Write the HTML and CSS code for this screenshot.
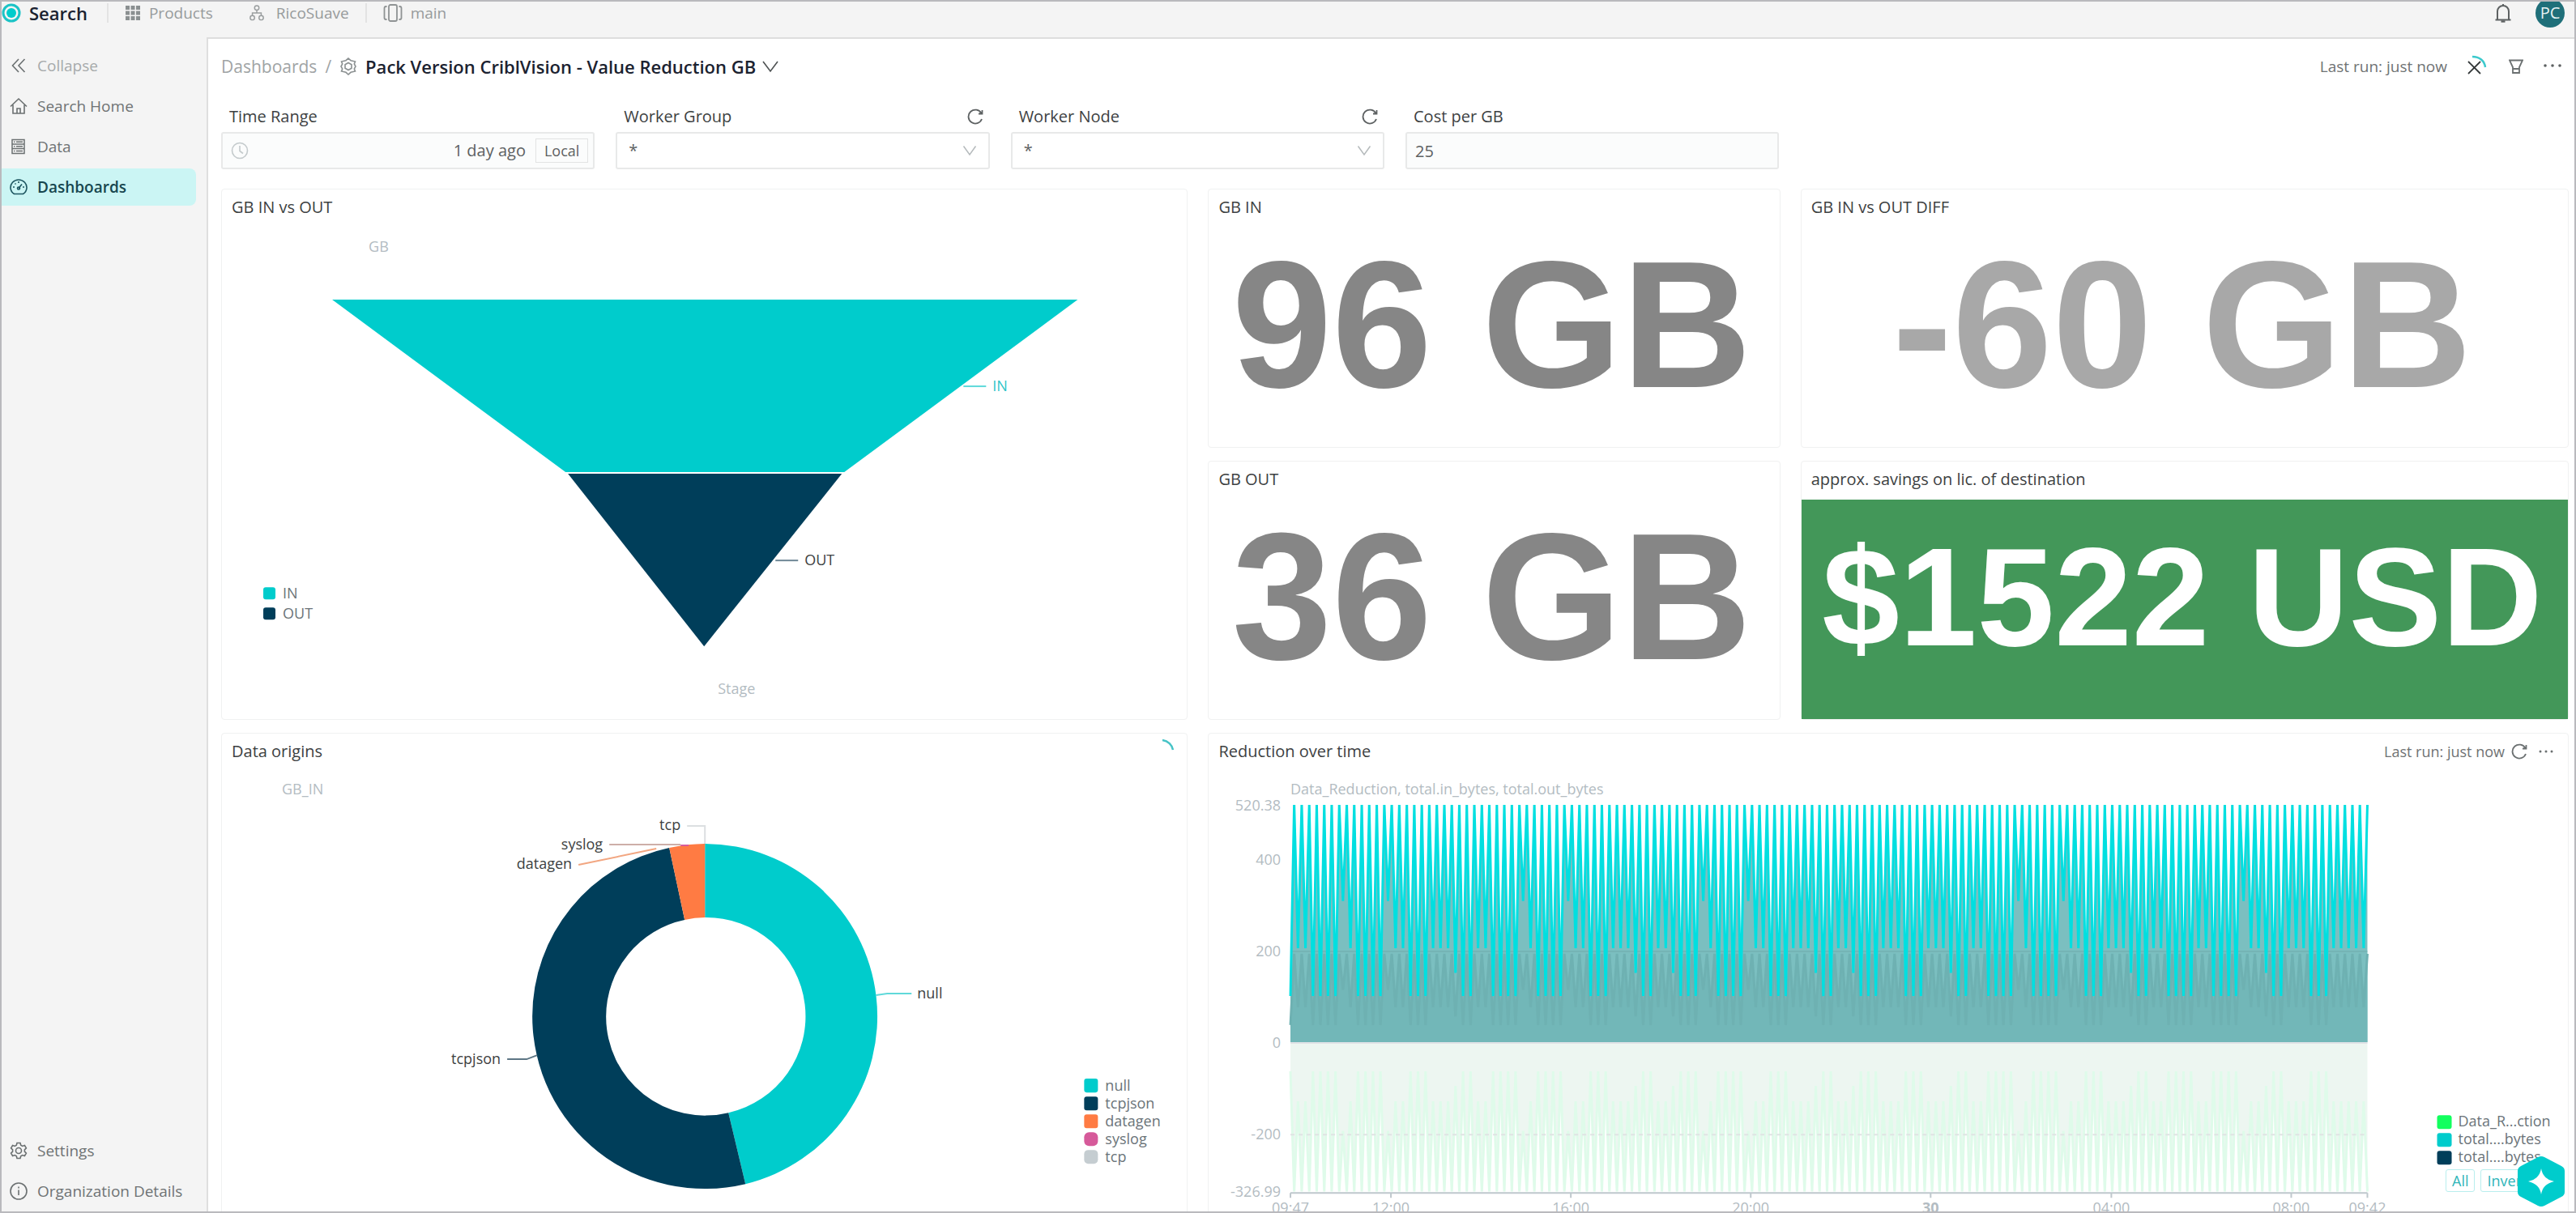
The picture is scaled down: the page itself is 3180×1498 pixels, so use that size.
FILE: index.html
```html
<!DOCTYPE html>
<html lang="en">
<head>
<meta charset="utf-8">
<title>Pack Version CriblVision - Value Reduction GB</title>
<link rel="stylesheet" href="styles.css">
</head>
<body>
<div class="app">
  <header class="topbar">
    <a class="brand" href="#">
      <svg class="brand-logo" viewBox="0 0 24 24"><circle cx="12" cy="12" r="10" fill="none" stroke="#1cc3c6" stroke-width="3"/><circle cx="12" cy="12" r="6" fill="#00cccc"/></svg>
      <span>Search</span>
    </a>
    <span class="divider"></span>
    <a class="crumb" href="#">
      <svg class="icon20" viewBox="0 0 20 20" fill="#8b9091"><path d="M1 1h5v5H1zM7.500 1h5v5h-5zM14 1h5v5h-5zM1 7.500h5v5H1zM7.500 7.500h5v5h-5zM14 7.500h5v5h-5zM1 14h5v5H1zM7.500 14h5v5h-5zM14 14h5v5h-5z"/></svg>
      <span>Products</span>
    </a>
    <a class="crumb crumb-org" href="#">
      <svg class="icon20" viewBox="0 0 20 22" fill="none" stroke="#9a9e9f" stroke-width="1.600"><circle cx="10" cy="4" r="3"/><circle cx="4" cy="17.500" r="3"/><circle cx="16" cy="17.500" r="3"/><path d="M10 7v4M4 14.500V11h12v3.500"/></svg>
      <span>RicoSuave</span>
    </a>
    <span class="divider"></span>
    <a class="crumb" href="#">
      <svg class="icon24" viewBox="0 0 24 24" fill="none" stroke="#8f9394" stroke-width="1.800"><rect x="7" y="2" width="10" height="20" rx="2"/><path d="M4.500 4H3.500Q1.500 4 1.500 6v12q0 2 2 2h1M19.500 4h1q2 0 2 2v12q0 2-2 2h-1"/></svg>
      <span>main</span>
    </a>
    <div class="topbar-end">
      <button class="icon-btn" type="button" aria-label="Notifications">
        <svg class="icon24" viewBox="0 0 24 24" fill="none" stroke="#5d6162" stroke-width="2"><path d="M5 20V10a7 7 0 0 1 14 0v10M2.500 20.500h19M12 3V1"/><path d="M9.500 22.500h5" stroke-width="2.400"/></svg>
      </button>
      <button class="avatar" type="button">PC</button>
    </div>
  </header>

  <nav class="sidebar">
    <a class="nav-item nav-muted" href="#"><svg class="icon22" viewBox="0 0 22 22" fill="none" stroke="#6b7071" stroke-width="1.600"><path d="M11 3l-7.500 8 7.500 8M18.500 3L11 11l7.500 8"/></svg><span>Collapse</span></a>
    <a class="nav-item" href="#"><svg class="icon22" viewBox="0 0 22 22" fill="none" stroke="#6b7071" stroke-width="1.600"><path d="M1 11.500L11 2l10 9.500M4 9.500V20h14V9.500M9 20v-6h4v6"/></svg><span>Search Home</span></a>
    <a class="nav-item" href="#"><svg class="icon22" viewBox="0 0 22 22" fill="none" stroke="#6b7071" stroke-width="1.500"><path d="M3 2.500h15v17H3zM3 8h15M3 13.500h15M8 5.300h8M8 10.800h8M8 16.500h8M5 5.300h1.500M5 10.800h1.500M5 16.500h1.500"/></svg><span>Data</span></a>
    <a class="nav-item nav-active" href="#"><svg class="icon22" viewBox="0 0 22 22" fill="none" stroke="#1d5560" stroke-width="1.600"><path d="M5.500 19.500a10 9.500 0 1 1 11 0z"/><path d="M11 12.500l4-5"/><circle cx="11" cy="12.500" r="1.500"/><path d="M11 4v2M4 11h2M16 11h2M6.500 6.500l1 1"/></svg><span>Dashboards</span></a>
    <span class="spacer"></span>
    <a class="nav-item" href="#"><svg class="icon22" viewBox="0 0 22 22" fill="none" stroke="#6b7071" stroke-width="1.600"><path d="M9 1.500h4l.7 2.800 2 1.100 2.700-.9 2 3.400-2 2v2.200l2 2-2 3.400-2.700-.9-2 1.100-.7 2.800H9l-.7-2.800-2-1.100-2.700.9-2-3.400 2-2V9.900l-2-2 2-3.400 2.700.9 2-1.100z"/><circle cx="11" cy="11" r="3.500"/></svg><span>Settings</span></a>
    <a class="nav-item" href="#"><svg class="icon22" viewBox="0 0 22 22" fill="none" stroke="#6b7071" stroke-width="1.600"><circle cx="11" cy="11" r="10"/><path d="M11 9.500V16M11 5.500v2"/></svg><span>Organization Details</span></a>
  </nav>

  <main class="main">
    <div class="page-head">
      <a class="head-link" href="#">Dashboards</a>
      <span class="head-sep">/</span>
      <svg class="icon22" viewBox="0 0 22 22" fill="none" stroke="#8b9091" stroke-width="1.600"><path d="M11 1l3 2.700 5.500 1.300-1.200 3 1.700 3-1.700 3 1.200 3-5.500 1.300L11 21l-3-2.700L2.500 17l1.200-3L2 11l1.700-3-1.200-3L8 3.700z"/><path d="M11 6.500l4 2.200v4.600l-4 2.200-4-2.200V8.700z"/></svg>
      <h1>Pack Version CriblVision - Value Reduction GB</h1>
      <svg class="icon20" viewBox="0 0 20 20" fill="none" stroke="#4d5152" stroke-width="1.600"><path d="M1 4l9 12 9-12"/></svg>
      <div class="head-actions">
        <span class="last-run">Last run: just now</span>
        <button class="icon-btn" type="button" aria-label="Cancel run"><svg class="icon28" viewBox="0 0 28 28" fill="none"><path d="M2 8l15 15M17 8L2 23" stroke="#333738" stroke-width="1.800"/><path d="M7 2c9 0 15 5 16 13" stroke="#3cc9cc" stroke-width="2.500"/></svg></button>
        <button class="icon-btn" type="button" aria-label="Filter"><svg class="icon18" viewBox="0 0 18 18" fill="none" stroke="#6b7071" stroke-width="1.800"><path d="M1 1.500h16l-4 8.500v7H5v-7zM5 12h8"/></svg></button>
        <button class="icon-btn" type="button" aria-label="More"><svg class="icon24" viewBox="0 0 24 24" fill="#5d6162"><circle cx="3" cy="11" r="1.800"/><circle cx="12" cy="11" r="1.800"/><circle cx="21" cy="11" r="1.800"/></svg></button>
      </div>
    </div>

    <form class="filters">
      <div class="field">
        <div class="field-head"><label for="range">Time Range</label></div>
        <button class="control range" id="range" type="button">
          <svg class="icon22" viewBox="0 0 22 22" fill="none" stroke="#c4cacc" stroke-width="1.600"><circle cx="11" cy="11" r="9.500"/><path d="M11 5v6.500l4 3"/></svg>
          <span class="range-value">1 day ago</span><span class="tag">Local</span>
        </button>
      </div>
      <div class="field">
        <div class="field-head"><label for="group">Worker Group</label><svg class="icon20" viewBox="0 0 20 20" fill="none" stroke="#5d6162" stroke-width="1.800"><path d="M17.500 6A8.500 8.500 0 1 0 18 13M18.500 2v4.500H14"/></svg></div>
        <div class="select-wrap"><select class="control" id="group"><option>*</option></select><svg class="chevron" viewBox="0 0 18 14" fill="none" stroke="#b5babc" stroke-width="1.500"><path d="M1.500 1.500L9 12l7.500-10.500"/></svg></div>
      </div>
      <div class="field">
        <div class="field-head"><label for="node">Worker Node</label><svg class="icon20" viewBox="0 0 20 20" fill="none" stroke="#5d6162" stroke-width="1.800"><path d="M17.500 6A8.500 8.500 0 1 0 18 13M18.500 2v4.500H14"/></svg></div>
        <div class="select-wrap"><select class="control" id="node"><option>*</option></select><svg class="chevron" viewBox="0 0 18 14" fill="none" stroke="#b5babc" stroke-width="1.500"><path d="M1.500 1.500L9 12l7.500-10.500"/></svg></div>
      </div>
      <div class="field">
        <div class="field-head"><label for="cost">Cost per GB</label></div>
        <input class="control cost" id="cost" type="text" value="25">
      </div>
    </form>

    <div class="grid">
      <section class="panel panel-funnel">
        <h2>GB IN vs OUT</h2>
        <svg class="chart" viewBox="0 0 1191 604">
          <text class="axis" x="181" y="30">GB</text>
          <path d="M136 89H1056L768 302H424z" fill="#00cccc"/>
          <path d="M427 304H765L595 517z" fill="#003e5a"/>
          <path d="M915 196h28" stroke="#5fd9da" stroke-width="2"/>
          <text x="951" y="202" fill="#2ec5c8">IN</text>
          <path d="M683 411h28" stroke="#6f8896" stroke-width="2"/>
          <text x="719" y="417">OUT</text>
          <text class="axis" x="612" y="576">Stage</text>
          <rect x="51" y="444" width="15" height="15" rx="3" fill="#00cccc"/><text class="key" x="75" y="458">IN</text>
          <rect x="51" y="469" width="15" height="15" rx="3" fill="#003e5a"/><text class="key" x="75" y="483">OUT</text>
        </svg>
      </section>
      <section class="panel"><h2>GB IN</h2><div class="stat stat-dark">96 GB</div></section>
      <section class="panel"><h2>GB IN vs OUT DIFF</h2><div class="stat stat-light">-60 GB</div></section>
      <section class="panel"><h2>GB OUT</h2><div class="stat stat-dark">36 GB</div></section>
      <section class="panel"><h2>approx. savings on lic. of destination</h2><div class="stat stat-green">$1522 USD</div></section>

      <section class="panel panel-tall">
        <div class="panel-head"><h2>Data origins</h2><svg class="spin" viewBox="0 0 28 28" fill="none" stroke="#45c3c6" stroke-width="2.500"><path d="M12 2c7 1 12 6 13 12"/></svg></div>
        <svg class="chart" viewBox="0 0 1191 591">
          <text class="axis" x="74" y="28">GB_IN</text>
          <path d="M596 89A213 213 0 0 1 646 509L625 421A122 122 0 0 0 596 180z" fill="#00cccc"/>
          <path d="M646 509A213 213 0 0 1 383 302A213 213 0 0 1 552 94L571 183A122 122 0 0 0 474 302A122 122 0 0 0 625 421z" fill="#003e5a"/>
          <path d="M552 94A213 213 0 0 1 596 89V180A122 122 0 0 0 571 183z" fill="#ff7b43"/>
          <path d="M566 91h10" stroke="#d65a9a" stroke-width="2"/>
          <g fill="none" stroke-width="2">
            <path d="M574 67h22v22" stroke="#dcdfe1"/>
            <path d="M478 90h88" stroke="#cdaea8"/>
            <path d="M440 115l96-20" stroke="#f2a681"/>
            <path d="M807 276l14-2h30" stroke="#5fd9da"/>
            <path d="M352 355h24l13-5" stroke="#5d7685"/>
          </g>
          <text x="566" y="72" text-anchor="end">tcp</text>
          <text x="470" y="96" text-anchor="end">syslog</text>
          <text x="432" y="120" text-anchor="end">datagen</text>
          <text x="858" y="280">null</text>
          <text x="344" y="361" text-anchor="end">tcpjson</text>
          <rect x="1064" y="379" width="17" height="17" rx="3" fill="#00cccc"/><text class="key" x="1090" y="394">null</text>
          <rect x="1064" y="401" width="17" height="17" rx="3" fill="#003e5a"/><text class="key" x="1090" y="416">tcpjson</text>
          <rect x="1064" y="423" width="17" height="17" rx="3" fill="#ff7b43"/><text class="key" x="1090" y="438">datagen</text>
          <rect x="1064" y="445" width="17" height="17" rx="6" fill="#d65a9a"/><text class="key" x="1090" y="460">syslog</text>
          <rect x="1064" y="467" width="17" height="17" rx="5" fill="#c5cdd1"/><text class="key" x="1090" y="482">tcp</text>
        </svg>
      </section>

      <section class="panel panel-wide">
        <div class="panel-head"><h2>Reduction over time</h2>
          <div class="panel-actions"><span>Last run: just now</span>
            <button class="icon-btn" type="button" aria-label="Refresh"><svg class="icon20" viewBox="0 0 20 20" fill="none" stroke="#6b7071" stroke-width="1.800"><path d="M17.500 6A8.500 8.500 0 1 0 18 13M18.500 2v4.500H14"/></svg></button>
            <button class="icon-btn" type="button" aria-label="More"><svg class="icon18" viewBox="0 0 18 18" fill="#6b7071"><circle cx="2" cy="9" r="1.500"/><circle cx="9" cy="9" r="1.500"/><circle cx="16" cy="9" r="1.500"/></svg></button>
          </div>
        </div>
        <div class="chart-box">
          <svg class="chart" viewBox="0 0 1677 591">
            <text class="axis" x="101" y="28">Data_Reduction, total.in_bytes, total.out_bytes</text>
            <g class="axis" text-anchor="end">
              <text x="89" y="48">520.38</text><text x="89" y="115">400</text><text x="89" y="228">200</text>
              <text x="89" y="341">0</text><text x="89" y="454">-200</text><text x="89" y="525">-326.99</text>
            </g>
            <clipPath id="plot"><rect x="99" y="41" width="1333" height="479"/></clipPath>
            <g clip-path="url(#plot)" fill="none">
              <path id="cut-area" fill="#edf6f1"/>
              <path id="cut-line" stroke="#dffbea" stroke-width="3"/>
              <path id="in-area" fill="#7bbfc0"/>
              <path id="out-area" fill="#72b7b8"/>
              <path id="out-line" stroke="#6eb1b2" stroke-width="3"/>
              <path d="M101 222h1329" stroke="#6fa9aa" stroke-opacity=".5" stroke-width="2"/>
              <path id="in-line" stroke="#00dfe0" stroke-width="3"/>
              <path d="M101 448h1329" stroke="#dfe3e3" stroke-width="2" stroke-dasharray="5 5"/>
            </g>
            <path d="M101 335h1329" stroke="#e0e2e6" stroke-width="2"/>
            <path d="M101 520h1329M101 520v6M225 520v6M447 520v6M669 520v6M891 520v6M1114 520v6M1336 520v6M1430 520v6" stroke="#bfc8cd" stroke-width="2"/>
            <g class="axis" text-anchor="middle">
              <text x="101" y="545">09:47</text><text x="225" y="545">12:00</text><text x="447" y="545">16:00</text><text x="669" y="545">20:00</text>
              <text x="891" y="545" font-weight="700">30</text><text x="1114" y="545">04:00</text><text x="1336" y="545">08:00</text><text x="1430" y="545">09:42</text>
            </g>
            <rect x="1516" y="424" width="18" height="17" rx="3" fill="#12ff5e"/><text class="key" x="1542" y="438">Data_R...ction</text>
            <rect x="1516" y="446" width="18" height="17" rx="3" fill="#00cccc"/><text class="key" x="1542" y="460">total....bytes</text>
            <rect x="1516" y="468" width="18" height="17" rx="3" fill="#003e5a"/><text class="key" x="1542" y="482">total....bytes</text>
          </svg>
          <div class="series-buttons"><button type="button">All</button><button type="button">Invert</button></div>
        </div>
      </section>
    </div>
  </main>
  <button class="assist" type="button" aria-label="Assistant">
    <svg viewBox="0 0 58 64"><path d="M25 2q4-2 8 0l21 11q4 2 4 6v26q0 4-4 6L33 62q-4 2-8 0L4 51q-4-2-4-6V19q0-4 4-6z" fill="#00cccc"/><path d="M29 16q2 13 16 16-14 3-16 16-2-13-16-16 14-3 16-16z" fill="#fff"/></svg>
  </button>
</div>
<script src="chart.js"></script>
</body>
</html>
```
FILE: styles.css
```css
* { box-sizing: border-box; }
body { margin: 0; background: #fff; font-family: "Open Sans", "Noto Sans", sans-serif; font-size: 20px; line-height: 26px; color: #55595a; }
a { color: inherit; text-decoration: none; }
button, input, select { font: inherit; color: inherit; margin: 0; }
h1, h2 { margin: 0; font-size: 20px; }
svg { flex: none; display: block; }

.app {
  height: 100vh; overflow: hidden; border: 2px solid #b9b9bd; background: #f4f4f4;
  display: grid; grid-template: 44px minmax(0, 1fr) / 253px minmax(0, 1fr);
}
.icon18 { width: 18px; height: 18px; }
.icon20 { width: 20px; height: 20px; }
.icon22 { width: 22px; height: 22px; }
.icon24 { width: 24px; height: 24px; }
.icon28 { width: 28px; height: 28px; }
.icon-btn { border: 0; background: none; padding: 0; display: flex; }

.topbar { grid-column: 1 / -1; display: flex; align-items: center; padding-bottom: 16px; font-size: 19px; color: #979b9c; }
.brand { display: flex; align-items: center; gap: 10px; margin-right: 4px; font-size: 22px; font-weight: 600; color: #1b2230; }
.brand-logo { width: 24px; height: 24px; }
.divider { width: 2px; height: 24px; background: #e3e3e3; margin: 0 20px; }
.crumb { display: flex; align-items: center; gap: 10px; }
.crumb-org { margin-left: 44px; gap: 14px; }
.topbar-end { margin-left: auto; display: flex; align-items: center; gap: 28px; padding-right: 12px; }
.avatar { width: 36px; height: 36px; border: 0; border-radius: 50%; background: #1f6f79; color: #e6f2f2; padding: 0; font-size: 20px; line-height: 36px; }

.sidebar { display: flex; flex-direction: column; gap: 4px; padding: 12px 13px 2px 0; font-size: 19px; color: #6f7374; }
.nav-item { height: 46px; display: flex; align-items: center; gap: 12px; padding-left: 10px; }
.nav-muted { color: #a6aaab; }
.nav-active { background: #cbf5f4; color: #17474f; font-weight: 600; border-radius: 0 8px 8px 0; }
.spacer { flex: 1; }

.main { background: #fff; border: solid #dedede; border-width: 2px 0 0 2px; padding: 18px 7px 0 16px; overflow: hidden; }
.page-head { display: flex; align-items: center; height: 32px; gap: 10px; }
.head-link, .head-sep { color: #a0a4a5; font-size: 21px; }
.page-head h1 { font-size: 22px; font-weight: 600; color: #1b2230; margin-right: -2px; }
.head-actions { margin-left: auto; display: flex; align-items: center; gap: 24px; padding-right: 8px; }
.last-run { font-size: 19px; color: #6f7374; }

.filters { display: grid; grid-template-columns: repeat(6, minmax(0, 1fr)); gap: 26px; margin-top: 33px; }
.field-head { display: flex; align-items: center; justify-content: space-between; height: 26px; margin-bottom: 6px; padding: 0 8px 0 10px; color: #3d4142; }
.control { display: block; width: 100%; height: 46px; border: 2px solid #e8e9e9; border-radius: 3px; background: #fff; padding: 0 14px; color: #5d6162; appearance: none; }
.range { display: flex; align-items: center; background: #fbfcfc; padding: 0 6px 0 10px; }
.range-value { margin-left: auto; }
.tag { margin-left: 12px; border: 1px solid #e2e3e3; padding: 1px 10px; font-size: 18px; }
.select-wrap { display: grid; align-items: center; }
.select-wrap > * { grid-area: 1 / 1; }
.chevron { width: 18px; height: 14px; justify-self: end; margin-right: 16px; pointer-events: none; }
.cost { background: #fbfcfc; padding: 0 10px; }

.grid { display: grid; grid-template-columns: 1193fr 706fr 948fr; grid-template-rows: 320px 320px auto; gap: 16px 25px; margin-top: 24px; }
.panel { border: 1px solid #f0f1f1; border-radius: 4px; display: flex; flex-direction: column; min-width: 0; min-height: 0; }
.panel h2 { font-weight: 400; line-height: 26px; padding: 9px 12px 12px; color: #3d4142; }
.panel-funnel { grid-row: span 2; }
.panel-wide { grid-column: span 2; }
.panel-head { display: flex; justify-content: space-between; height: 47px; }
.panel-actions { display: flex; align-items: center; gap: 8px; padding: 0 18px 3px 0; font-size: 18px; color: #6f7374; }
.panel-actions .icon-btn + .icon-btn { margin-left: 6px; }
.spin { width: 28px; height: 28px; margin: 6px 14px 0 0; }
.chart { width: 100%; height: auto; }
.chart text { font-size: 18px; fill: #3d4142; }
.chart text[fill] { fill: #2ec5c8; }
.chart text.axis, .chart .axis text { fill: #b3bcc2; }
.chart text.key { fill: #6b7479; }
.stat { flex: 1; display: flex; align-items: center; justify-content: center; font-family: "Liberation Sans", Arial, sans-serif; font-weight: 700; font-size: 222px; line-height: 200px; padding: 0 6px 32px 0; white-space: nowrap; }
.stat-dark { color: #868686; }
.stat-light { color: #a8a8a8; }
.stat-green { background: #439759; color: #fff; font-size: 172px; }

.chart-box { position: relative; }
.series-buttons { position: absolute; left: 91%; top: 491px; display: flex; gap: 7px; }
.series-buttons button { height: 28px; border: 1px solid #b9eeee; border-radius: 3px; background: #fff; color: #2fb5b9; font-size: 18px; line-height: 24px; padding: 0 7px; }
.assist { position: absolute; right: 14px; bottom: 7px; border: 0; padding: 0; background: none; }
.assist svg { width: 58px; height: 64px; }
```
FILE: chart.js
```js
// Low points of total.in_bytes, one letter per ten-minute step; every other sample is the peak.
const levels = { L: 101, X: 152, M: 206, S: 309 };
const lows =
  "LMMLLLL" +
  "SMLLLLSMMLLLMMMXLLMMLLLL" +
  "SMLLLLSMMLLLMMMXLLMMXLLL" +
  "SMLLLLSMMLLLMMMXLLMMXLLL" +
  "MMMLLLMMMXLLMMLLLLSMLLLL" +
  "SMMLLLMMMXLLMMLLL" +
  "LMMLLLLSMMXLLMMMLLLMMMMM";
const peak = 520.38, left = 101, width = 1329, zero = 334, scale = 0.564;

const values = [...lows].flatMap(c => [levels[c], peak]);
const step = width / (values.length - 1);
const line = k => "M" + values.map((v, i) =>
  (left + i * step).toFixed(1) + " " + (zero - v * k * scale).toFixed(1)).join("L");
const area = k => line(k) + `V${zero}H${left}Z`;
const draw = (id, d) => document.getElementById(id).setAttribute("d", d);

draw("in-area", area(1));
draw("in-line", line(1));
draw("out-area", area(0.372));
draw("out-line", line(0.372));
draw("cut-area", area(-0.628));
draw("cut-line", line(-0.628));
```
